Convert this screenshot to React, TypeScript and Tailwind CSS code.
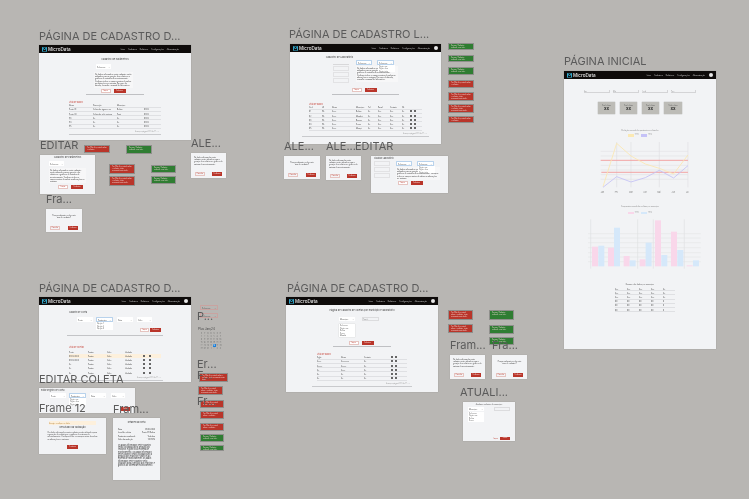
import React from "react";

const PT = "Página de cadastro de coletas";
const LOREM =
  "Os dados informados neste cadastro serão utilizados para a geração dos relatórios e gráficos do sistema de monitoramento.";
const BLOCK = LOREM + " Verifique todos os campos antes de salvar as alterações no sistema.";
const LONG_BLOCK = BLOCK + " Em caso de dúvida, consulte o manual do laboratório.";

const Label = ({ text, className }: { text: string; className: string }) => (
  <div className={`absolute whitespace-nowrap text-[11px] leading-[13px] text-[#5b5b5b] ${className}`}>{text}</div>
);

const Nav = ({ avatar }: { avatar?: boolean }) => (
  <div className={`flex h-[8px] shrink-0 items-center justify-between bg-[#0e0b0a] pl-[3px] ${avatar ? "pr-[3px]" : "pr-[12px]"}`}>
    <div className="flex items-center gap-[1px]">
      <svg width="5" height="5" viewBox="0 0 10 10" fill="none" stroke="#35b6dc" strokeWidth="1.8">
        <path d="M1 9V1l4 5 4-5v8" />
        <path d="M1 1h8M1 9h8" strokeWidth="1" />
      </svg>
      <span className="text-[4.6px] font-medium leading-[5px] text-[#e8e8e8]">MicroData</span>
    </div>
    <div className="flex items-center gap-[3px] text-[1.8px] leading-[3px] text-[#cfcfcf]">
      <span>Início</span>
      <span>Cadastros</span>
      <span>Relatórios</span>
      <span>Configurações</span>
      <span>Administração</span>
      {avatar && <span className="ml-[1px] h-[4px] w-[4px] rounded-full bg-[#e8e8e8]" />}
    </div>
  </div>
);

const Toast = ({ green, long, className }: { green?: boolean; long?: boolean; className: string }) => (
  <div
    className={`absolute overflow-hidden border-[0.5px] border-[#8f8f8c] px-[2px] py-[1px] text-[1.5px] leading-[2px] text-[#f0d9d6] ${
      green ? "bg-[#2f7d32]" : "bg-[#b9352a]"
    } ${className}`}
  >
    {green
      ? "Sucesso! Cadastro realizado com êxito."
      : long
        ? "Erro! Não foi possível salvar o cadastro, tente novamente mais tarde."
        : "Erro! Não foi possível salvar o cadastro."}
  </div>
);

const Buttons = ({ className }: { className?: string }) => (
  <div className={`flex justify-center gap-[3px] ${className ?? ""}`}>
    <span className="flex h-[4px] w-[10px] items-center justify-center border-[0.5px] border-[#e6c4c0] bg-white text-[1.5px] text-[#b9352a]">Limpar</span>
    <span className="flex h-[4px] w-[12px] items-center justify-center bg-[#b9352a] text-[1.5px] text-[#f5dcd9]">Cadastrar</span>
  </div>
);

const Title = ({ text, className }: { text: string; className?: string }) => (
  <div className={`text-center text-[2.4px] leading-[3px] text-[#444] ${className ?? ""}`}>{text}</div>
);

const Field = ({ text, className }: { text: string; className: string }) => (
  <div className={`flex h-[5px] items-center justify-between rounded-[0.5px] bg-white px-[1px] text-[1.8px] leading-[2px] text-[#555] ${className}`}>
    <span>{text}</span>
    <span>⌄</span>
  </div>
);

const TextBlock = ({ long, className }: { long?: boolean; className: string }) => (
  <div className={`bg-[#f7f7f8] p-[1px] text-[1.8px] leading-[2.2px] text-[#3a3a3a] ${className}`}>{long ? LONG_BLOCK : BLOCK}</div>
);

const Actions = () => (
  <span className="flex gap-[2px]">
    <span className="h-[2px] w-[2px] bg-[#666]" />
    <span className="h-[2px] w-[2px] bg-[#666]" />
  </span>
);

const Table = ({ grid, rows, className }: { grid: string; rows: string[][]; className: string }) => (
  <div className={`flex flex-col text-[1.8px] leading-[2px] text-[#444] ${className}`}>
    {rows.map((row, i) => (
      <div key={i} className={`grid h-[4.2px] items-center border-b-[0.5px] border-[#dfe0e3] ${grid}`}>
        {row.map((c, j) => (c === "#" ? <Actions key={j} /> : <span key={j}>{c}</span>))}
      </div>
    ))}
  </div>
);

const ListFooter = ({ className }: { className: string }) => (
  <div className={className}>
    <div className="pr-[2px] text-right text-[1.6px] leading-[2px] text-[#888]">Itens por página 5 1-5 de 12 &lt; &gt;</div>
    <div className="mt-[2px] h-[0.7px] bg-[#c9cacd]" />
  </div>
);

const Confirm = ({ long, className }: { long?: boolean; className: string }) => (
  <div className={`absolute flex flex-col items-center justify-between bg-[#f3f4f6] px-[3px] pb-[2px] pt-[3px] shadow-[0_0_1px_#9a9a98] ${className}`}>
    <div className={`text-[1.7px] leading-[2.2px] text-[#333] ${long ? "text-left" : "px-[2px] pt-[2px] text-center"}`}>
      {long ? LOREM : "Deseja realmente excluir este item do cadastro?"}
    </div>
    <div className="flex w-full justify-between px-[1px]">
      <span className="flex h-[4px] w-[10px] items-center justify-center border-[0.5px] border-[#e6c4c0] text-[1.5px] text-[#b9352a]">Cancelar</span>
      <span className="flex h-[4px] w-[10px] items-center justify-center bg-[#b9352a] text-[1.5px] text-[#f5dcd9]">Confirmar</span>
    </div>
  </div>
);

const Dropdown = ({ className }: { className: string }) => (
  <div className={`absolute bg-white px-[1px] text-[1.7px] leading-[2.4px] text-[#555] ${className}`}>
    Opção um
    <br />
    Opção dois
    <br />
    Opção três
  </div>
);

const LineChart = () => (
  <svg width="103.3" height="53.3" viewBox="90 270 310 160" className="ml-[26px] mt-[3px] block" fill="none">
    {[304, 318, 346, 360, 374, 388].map((y) => (
      <path key={y} d={`M122 ${y}H384`} stroke="#e2e3e5" strokeWidth="2" />
    ))}
    {[170, 213, 298, 384].map((x) => (
      <path key={x} d={`M${x} 276V412`} stroke="#e0e0e2" strokeWidth="2" />
    ))}
    <path d="M122 331H384M124 367H384" stroke="#f2a3a3" strokeWidth="3" />
    <polyline points="129,410 170,280 213,318 256,342 298,355 341,372 384,315" stroke="#fbe7b0" strokeWidth="2.5" />
    <polyline points="129,412 170,380 213,396 256,383 298,361 341,384 384,347" stroke="#c3c0f5" strokeWidth="2.5" />
    <text x="122" y="428" fontSize="6" fill="#888">Jan</text>
    <text x="164" y="428" fontSize="6" fill="#888">Fev</text>
    <text x="207" y="428" fontSize="6" fill="#888">Mar</text>
    <text x="250" y="428" fontSize="6" fill="#888">Abr</text>
    <text x="292" y="428" fontSize="6" fill="#888">Mai</text>
    <text x="335" y="428" fontSize="6" fill="#888">Jun</text>
    <text x="378" y="428" fontSize="6" fill="#888">Jul</text>
  </svg>
);

const bars = [
  [96, 142, "#f9d7ea"],
  [115, 139, "#d5e8fa"],
  [144, 145, "#f9d7ea"],
  [162, 85, "#d5e8fa"],
  [191, 170, "#f9d7ea"],
  [209, 183, "#d5e8fa"],
  [239, 180, "#f9d7ea"],
  [257, 130, "#d5e8fa"],
  [285, 63, "#f9d7ea"],
  [304, 167, "#d5e8fa"],
  [333, 97, "#f9d7ea"],
  [352, 152, "#d5e8fa"],
  [380, 198, "#f9d7ea"],
  [399, 183, "#d5e8fa"],
] as const;

const BarChart = () => (
  <svg width="123.3" height="56.7" viewBox="60 50 370 170" className="ml-[16px] mt-[2px] block" fill="none">
    {[103, 116, 130, 145, 160, 173, 187].map((y) => (
      <path key={y} d={`M84 ${y}H422`} stroke="#e4e5e7" strokeWidth="2" />
    ))}
    {[92, 233, 280, 373].map((x) => (
      <path key={x} d={`M${x} 60V208`} stroke="#e0e1e3" strokeWidth="2" />
    ))}
    {bars.map(([x, top, color]) => (
      <rect key={x} x={x} y={top} width="18" height={201 - top} fill={color} />
    ))}
  </svg>
);

const Legend = ({ a, b, className }: { a: string; b: string; className: string }) => (
  <div className={`flex justify-center gap-[3px] text-[1.5px] leading-[2px] text-[#888] ${className}`}>
    <span className="flex items-center gap-[1px]">
      <span className={`h-[2.5px] w-[5.5px] ${a}`} />
      2023
    </span>
    <span className="flex items-center gap-[1px]">
      <span className={`h-[2.5px] w-[5.5px] ${b}`} />
      2024
    </span>
  </div>
);

const Kpi = ({ className }: { className: string }) => (
  <div className={`flex h-[12.5px] flex-col items-center justify-center bg-[#bdbcb7] shadow-[0_0_1px_#8e8e8c] ${className}`}>
    <span className="text-[1.5px] leading-[2px] text-[#555]">Total coletas</span>
    <span className="text-[3.5px] font-bold leading-[4px] text-[#222]">XX</span>
  </div>
);

const PageFrame = ({ className, children, avatar = true }: { className: string; children: React.ReactNode; avatar?: boolean }) => (
  <div className={`absolute flex flex-col bg-[#f2f3f5] shadow-[0_0_1px_#8e8e8c] ${className}`}>
    <Nav avatar={avatar} />
    {children}
  </div>
);

const FilterBox = ({ text, className }: { text: string; className: string }) => (
  <div className={`h-[3px] border-b-[0.5px] border-r-[0.5px] border-[#d4d4d6] text-[1.6px] leading-[2px] text-[#888] ${className}`}>{text}</div>
);

const days = ["S", "T", "Q", "Q", "S", "S", "D", ...Array.from({ length: 35 }, (_, i) => String((i % 31) + 1))];

export default function App() {
  return (
    <div className="h-[499px] w-[749px] overflow-hidden bg-[#b8b6b3]">
      <div className="relative h-[499px] w-[749px] bg-[#b8b6b3] font-['Inter',sans-serif] blur-[0.35px]">
        {/* coletas */}
        <PageFrame avatar={false} className="left-[39px] top-[45px] h-[95px] w-[152px]">
          <Title text="Cadastro de Parâmetros" className="mt-[5px]" />
          <Field text="Selecione" className="ml-[57px] mt-[3px] w-[15px]" />
          <TextBlock long className="ml-[55px] mt-[3px] h-[16px] w-[39px]" />
          <Buttons className="mt-[1px] pr-[4px]" />
          <div className="mx-[47px] mt-[1px] h-[0.7px] bg-[#bfc0c3]" />
          <div className="ml-[30px] mt-[6px] text-[2px] leading-[3px] text-[#c8493e]">Lista de dados</div>
          <Table
            grid="grid-cols-[24px_24px_27px_20px]"
            rows={[
              ["Nome", "Descrição", "Município", ""],
              ["Ponto 01", "Coleta de água no rio", "Belém", "01/02"],
              ["Ponto 02", "Coleta de solo na área", "Pará", "01/02"],
              ["P3", "Xx", "Xx", "01/02"],
              ["P4", "Xx", "Xx", "01/02"],
              ["P5", "Xx", "Xx", "01/02"],
            ]}
            className="mx-[30px]"
          />
          <ListFooter className="mx-[30px] mt-[1px]" />
        </PageFrame>

        <div className="absolute left-[40px] top-[155px] flex h-[39px] w-[55px] flex-col bg-[#f2f3f5] shadow-[0_0_1px_#8e8e8c]">
          <Title text="Cadastro de Parâmetros" className="mt-[1px]" />
          <Field text="Selecione" className="ml-[9px] mt-[2px] w-[15px]" />
          <TextBlock className="mx-[9px] mt-[2px] h-[15px]" />
          <Buttons className="mt-[2px] pl-[6px]" />
        </div>
        <Confirm className="left-[46px] top-[209px] h-[23px] w-[36px]" />
        <Confirm long className="left-[191px] top-[153px] h-[25px] w-[35px]" />
        <Toast className="left-[84px] top-[145px] h-[8px] w-[26px]" />
        <Toast green className="left-[126px] top-[145px] h-[9px] w-[26px]" />
        <Toast long className="left-[109px] top-[164px] h-[10px] w-[26px]" />
        <Toast long className="left-[109px] top-[176px] h-[10px] w-[26px]" />
        <Toast green className="left-[151px] top-[165px] h-[8px] w-[25px]" />
        <Toast green className="left-[151px] top-[176px] h-[8px] w-[25px]" />

        {/* laboratório */}
        <PageFrame className="left-[290px] top-[44px] h-[100px] w-[151px]">
          <Title text="Cadastro de Laboratório" className="mt-[4px] pr-[52px]" />
          <div className="relative mt-[1px] flex gap-[7px] pl-[43px]">
            <div className="flex w-[16px] flex-col gap-[1px] pt-[1px]">
              <div className="h-[4px] border-b-[0.5px] border-[#d8d8da]" />
              <div className="h-[5px] border-[0.5px] border-[#e2e2e4]" />
              <div className="h-[5px] border-[0.5px] border-[#e2e2e4]" />
              <div className="h-[5px] border-[0.5px] border-[#e2e2e4]" />
            </div>
            <div className="flex flex-col">
              <div className="flex gap-[5px]">
                <Field text="Selecione" className="w-[16px] border-[0.5px] border-[#b8d2ec]" />
                <Field text="Selecione" className="w-[17px] border-[0.5px] border-[#b8d2ec]" />
              </div>
              <TextBlock long className="mt-[1px] h-[16px] w-[42px]" />
            </div>
            <Dropdown className="left-[88px] top-[5px] w-[17px]" />
          </div>
          <Buttons className="mt-[5px] pr-[3px]" />
          <div className="mx-[42px] mt-[2px] h-[0.7px] bg-[#bfc0c3]" />
          <div className="ml-[19px] mt-[8px] text-[2px] leading-[3px] text-[#c8493e]">Lista de dados</div>
          <Table
            grid="grid-cols-[13px_10px_24px_12px_10px_12px_12px_8px_10px]"
            rows={[
              ["Cód", "Uf", "Nome", "Município", "Tel", "Email", "Contato", "Ok", ""],
              ["01", "PA", "Xxxx", "Belém", "Xx", "Xxx", "Xxx", "Xx", "#"],
              ["02", "PA", "Xxxx", "Marabá", "Xx", "Xxx", "Xxx", "Xx", "#"],
              ["03", "PA", "Xxxx", "Breves", "Xx", "Xxx", "Xxx", "Xx", "#"],
              ["04", "PA", "Xxxx", "Soure", "Xx", "Xxx", "Xxx", "Xx", "#"],
              ["05", "PA", "Xxxx", "Marajó", "Xx", "Xxx", "Xxx", "Xx", "#"],
            ]}
            className="mx-[19px]"
          />
          <ListFooter className="mx-[12px] mt-[1px]" />
        </PageFrame>
        <Toast green className="left-[448px] top-[43px] h-[7px] w-[26px]" />
        <Toast green className="left-[448px] top-[55px] h-[7px] w-[26px]" />
        <Toast green className="left-[448px] top-[67px] h-[8px] w-[26px]" />
        <Toast className="left-[448px] top-[80px] h-[8px] w-[26px]" />
        <Toast long className="left-[448px] top-[92px] h-[9px] w-[26px]" />
        <Toast long className="left-[448px] top-[104px] h-[9px] w-[26px]" />
        <Toast className="left-[448px] top-[116px] h-[7px] w-[26px]" />
        <Confirm className="left-[284px] top-[156px] h-[23px] w-[36px]" />
        <Confirm long className="left-[326px] top-[156px] h-[24px] w-[35px]" />
        <div className="absolute left-[371px] top-[156px] flex h-[37px] w-[77px] flex-col bg-[#f2f3f5] px-[3px] shadow-[0_0_1px_#8e8e8c]">
          <div className="mt-[1px] text-[2px] leading-[3px] text-[#444]">Atualizar Laboratório</div>
          <div className="relative mt-[1px] flex gap-[6px]">
            <div className="flex w-[16px] flex-col gap-[1px]">
              <div className="h-[5px] border-[0.5px] border-[#e2e2e4]" />
              <div className="h-[5px] border-[0.5px] border-[#e2e2e4]" />
              <div className="h-[5px] border-[0.5px] border-[#e2e2e4]" />
            </div>
            <div className="flex flex-col">
              <div className="flex gap-[5px]">
                <Field text="Selecione" className="w-[16px] border-[0.5px] border-[#b8d2ec]" />
                <Field text="Selecione" className="w-[17px] border-[0.5px] border-[#b8d2ec]" />
              </div>
              <TextBlock className="mt-[1px] h-[13px] w-[44px]" />
            </div>
            <Dropdown className="left-[44px] top-[5px] w-[17px]" />
          </div>
          <Buttons className="mt-[1px] pl-[1px]" />
        </div>

        {/* página inicial */}
        <PageFrame className="left-[564px] top-[71px] h-[278px] w-[152px]">
          <div className="mt-[11px] flex pl-[20px]">
            <FilterBox text="Ano" className="mr-[3px] w-[26px]" />
            <FilterBox text="Mês" className="mr-[3px] w-[26px]" />
            <FilterBox text="Local" className="mr-[3px] w-[26px]" />
            <FilterBox text="Tipo" className="w-[25px]" />
          </div>
          <div className="mt-[8.5px] flex gap-[5px] pl-[34px]">
            <Kpi className="w-[17px]" />
            <Kpi className="w-[17px]" />
            <Kpi className="w-[17px]" />
            <Kpi className="w-[18px]" />
          </div>
          <Title text="Evolução mensal dos parâmetros coletados" className="mt-[14.5px] !text-[1.8px] !text-[#888]" />
          <Legend a="bg-[#fbe9b4]" b="bg-[#c5c2f7]" className="mt-[2.5px]" />
          <LineChart />
          <Title text="Comparativo anual das coletas por município" className="mt-[12.5px] !text-[1.8px] !text-[#888]" />
          <Legend a="bg-[#f9d7ea]" b="bg-[#d5e8fa]" className="mt-[3.5px]" />
          <BarChart />
          <Title text="Resumo dos dados por município" className="mt-[10px] !text-[1.8px] !text-[#555]" />
          <Table
            grid="grid-cols-[12px_12px_12px_12px_10px]"
            rows={[
              ["Xxx", "Xxx", "Xxx", "Xxx", "Xx"],
              ["Xxx", "Xxx", "Xxx", "Xxx", "Xx"],
              ["Xxx", "Xxx", "Xxx", "Xxx", "Xx"],
              ["00", "00", "00", "00", "0"],
              ["00", "00", "00", "00", "0"],
              ["00", "00", "00", "00", "0"],
            ]}
            className="ml-[51px] mr-[41px] mt-[1px]"
          />
        </PageFrame>

        {/* coleta */}
        <PageFrame className="left-[39px] top-[297px] h-[85px] w-[152px]">
          <div className="ml-[30px] mt-[6px] text-[2px] leading-[3px] text-[#444]">Cadastro de Coleta</div>
          <div className="mt-[3px] flex gap-[3px] pl-[38px]">
            <Field text="Ponto" className="w-[16px]" />
            <div className="flex flex-col bg-white">
              <Field text="Parâmetro" className="w-[17px] border-[0.5px] border-[#b8d2ec]" />
              <div className="px-[1px] text-[1.8px] leading-[2.6px] text-[#555]">
                Opção 1
                <br />
                Opção 2
                <br />
                Opção 3
              </div>
            </div>
            <Field text="Data" className="ml-[1px] w-[16px]" />
            <Field text="Valor" className="ml-[1px] w-[15px]" />
          </div>
          <div className="mt-[-2px] flex justify-end gap-[1px] pr-[30px]">
            <span className="flex h-[4px] w-[9px] items-center justify-center border-[0.5px] border-[#e6c4c0] bg-white text-[1.5px] text-[#b9352a]">Limpar</span>
            <span className="flex h-[4px] w-[11px] items-center justify-center bg-[#b9352a] text-[1.5px] text-[#f5dcd9]">Cadastrar</span>
          </div>
          <div className="mx-[28px] mt-[3px] h-[0.7px] bg-[#c3c4c7]" />
          <div className="ml-[30px] mt-[11px] text-[2px] leading-[3px] text-[#c8493e]">Lista de coletas</div>
          <div className="mx-[30px] flex flex-col text-[1.8px] leading-[2px] text-[#444]">
            {["Ponto", "01/02/2024", "01/02/2024", "Xx", "Xx", "Xx"].map((c, i) => (
              <div key={i} className={`grid h-[4.2px] grid-cols-[19px_19px_18px_18px_20px] items-center ${i === 1 ? "bg-[#fdf0dc]" : ""}`}>
                <span>{c}</span>
                <span>Parâm.</span>
                <span>Valor</span>
                <span>Unidade</span>
                {i > 0 ? <span className="flex gap-[4px]"><span className="h-[2px] w-[2px] bg-[#666]" /><span className="h-[2px] w-[2px] bg-[#666]" /></span> : <span />}
              </div>
            ))}
          </div>
          <ListFooter className="mx-[28px] mt-[1px]" />
        </PageFrame>
        <div className="absolute left-[39px] top-[388px] flex h-[25px] w-[96px] flex-col bg-[#f2f3f5] px-[2px] shadow-[0_0_1px_#8e8e8c]">
          <div className="mt-[1px] text-[2px] leading-[3px] text-[#444]">Editar Registro de Coleta</div>
          <div className="relative mt-[1px] flex gap-[3px] pl-[9px]">
            <Field text="Ponto" className="w-[16px]" />
            <Field text="Parâmetro" className="w-[17px] border-[0.5px] border-[#b8d2ec]" />
            <Field text="Data" className="ml-[1px] w-[16px]" />
            <Field text="Valor" className="ml-[2px] w-[14px]" />
            <Dropdown className="left-[28px] top-[5px] w-[17px]" />
          </div>
          <div className="mt-[9px] flex justify-end pr-[3px]">
            <span className="flex h-[4px] w-[9px] items-center justify-center bg-[#b9352a] text-[1.5px] text-[#f5dcd9]">Salvar</span>
          </div>
        </div>
        <div className="absolute left-[39px] top-[418px] flex h-[36px] w-[67px] flex-col items-center bg-[#f2f3f5] shadow-[0_0_1px_#8e8e8c]">
          <div className="mx-[10px] mt-[3px] h-[4px] self-stretch bg-[#fdf0dc] text-[1.6px] leading-[4px] text-[#b07a2a]">Atenção: verifique os dados</div>
          <Title text="Resultado da validação" className="mt-[1px]" />
          <div className="mt-[2px] h-[11px] w-[50px] text-[1.8px] leading-[2.2px] text-[#444]">{BLOCK}</div>
          <span className="mt-[3px] flex h-[4px] w-[11px] items-center justify-center bg-[#b9352a] text-[1.5px] text-[#f5dcd9]">Continuar</span>
        </div>
        <div className="absolute left-[113px] top-[418px] flex h-[62px] w-[47px] flex-col bg-[#f2f3f5] px-[5px] shadow-[0_0_1px_#8e8e8c]">
          <div className="mt-[3px] text-center text-[2px] leading-[3px] text-[#333]">Detalhes da coleta</div>
          <div className="mt-[4px] flex flex-col gap-[1px] text-[1.8px] leading-[2.4px] text-[#333]">
            <div className="flex justify-between"><span>Data</span><span>01/02/2024</span></div>
            <div className="flex justify-between"><span>Local de coleta</span><span>Ponto 01 Belém</span></div>
            <div className="flex justify-between"><span>Parâmetro analisado</span><span>Turbidez</span></div>
            <div className="flex justify-between"><span>Valor da medição</span><span>120 NTU</span></div>
          </div>
          <div className="mt-[3px] text-[1.9px] leading-[2.3px] text-[#333]">{LOREM} {LOREM} {LOREM}</div>
        </div>

        {/* peças soltas da coluna ao lado */}
        <Field text="Selecione" className="absolute left-[200px] top-[305px] w-[18px] border-[0.5px] border-[#c9a3a0] !bg-transparent" />
        <Field text="Selecione" className="absolute left-[200px] top-[313px] w-[18px] border-[0.5px] border-[#c9a3a0] !bg-transparent" />
        <div className="absolute left-[198px] top-[327px] w-[24px] text-[1.7px] leading-[3px] text-[#666]">
          <div className="text-[3px] leading-[4px] text-[#444]">Plus Jan/24</div>
          <div className="ml-[2px] mt-[1px] grid grid-cols-7 text-center">
            {days.map((d, i) => (
              <span key={i} className={i === 32 ? "bg-[#1f7fd6] text-white" : ""}>{d}</span>
            ))}
          </div>
        </div>
        <Toast long className="left-[199px] top-[373px] h-[9px] w-[29px]" />
        <Toast long className="left-[198px] top-[386px] h-[9px] w-[25px]" />
        <Toast className="left-[200px] top-[400px] h-[8px] w-[24px]" />
        <Toast className="left-[200px] top-[411px] h-[8px] w-[24px]" />
        <Toast className="left-[200px] top-[423px] h-[8px] w-[24px]" />
        <Toast green className="left-[200px] top-[434px] h-[8px] w-[24px]" />
        <Toast green className="left-[200px] top-[445px] h-[6px] w-[24px]" />

        {/* município */}
        <PageFrame className="left-[286px] top-[297px] h-[95px] w-[152px]">
          <Title text={PT + " por município e laboratório"} className="mt-[4px]" />
          <div className="mt-[5px] flex gap-[7px] pl-[53px]">
            <div className="flex flex-col gap-[3px]">
              <Field text="Município" className="w-[16px] !h-[4px]" />
              <div className="w-[16px] bg-white px-[1px] text-[1.7px] leading-[2.6px] text-[#555] shadow-[0_0_1px_#bbb]">
                Selecione
                <br />
                Opção um
                <br />
                Belém
                <br />
                Soure
                <br />
                Marabá
              </div>
            </div>
            <div className="h-[4px] w-[17px] border-[0.5px] border-[#dcdcde] text-[1.6px] leading-[2px] text-[#888]">Estado</div>
          </div>
          <Buttons className="mt-[4px] pr-[2px]" />
          <div className="mx-[47px] mt-[1px] h-[0.7px] bg-[#bfc0c3]" />
          <div className="ml-[31px] mt-[6px] text-[2px] leading-[3px] text-[#c8493e]">Lista de dados</div>
          <Table
            grid="grid-cols-[24px_23px_27px_16px]"
            rows={[
              ["Sigla", "Nome", "Contato", "#"],
              ["Xxxx", "Xxxxxxxx", "Xx", "#"],
              ["Xxxxx", "Xxxxx", "Xx", "#"],
              ["Xx", "Xxxx", "Xx", "#"],
              ["Xx", "Xx", "Xx", "#"],
              ["Xx", "Xx", "Xx", "#"],
            ]}
            className="mx-[31px]"
          />
          <ListFooter className="mx-[26px] mt-[1px]" />
        </PageFrame>
        <Toast long className="left-[448px] top-[310px] h-[10px] w-[25px]" />
        <Toast long className="left-[448px] top-[324px] h-[9px] w-[25px]" />
        <Toast green className="left-[489px] top-[310px] h-[10px] w-[25px]" />
        <Toast green className="left-[489px] top-[325px] h-[9px] w-[25px]" />
        <Toast green className="left-[489px] top-[337px] h-[8px] w-[25px]" />
        <Confirm long className="left-[450px] top-[355px] h-[24px] w-[35px]" />
        <Confirm className="left-[492px] top-[355px] h-[24px] w-[35px]" />
        <div className="absolute left-[463px] top-[402px] flex h-[39px] w-[52px] flex-col bg-[#f2f3f5] px-[5px] shadow-[0_0_1px_#8e8e8c]">
          <div className="mt-[1px] text-center text-[1.8px] leading-[3px] text-[#555]">Atualizar cadastro de município</div>
          <div className="mt-[1px] flex justify-between">
            <Field text="Município" className="w-[16px] !h-[4px]" />
            <div className="h-[4px] w-[16px] border-[0.5px] border-[#dcdcde]" />
          </div>
          <div className="mt-[1px] w-[16px] bg-white px-[1px] text-[1.7px] leading-[2.4px] text-[#555]">
            Selecione
            <br />
            Opção um
            <br />
            Belém
            <br />
            Soure
          </div>
          <div className="mb-[1px] mt-auto flex justify-end gap-[2px]">
            <span className="text-[1.5px] leading-[3px] text-[#b9352a]">Limpar</span>
            <span className="flex h-[3px] w-[10px] items-center justify-center bg-[#b9352a] text-[1.5px] text-[#f5dcd9]">Salvar</span>
          </div>
        </div>

        {/* nomes dos frames */}
        <Label text="PÁGINA DE CADASTRO D..." className="left-[39px] top-[30px]" />
        <Label text="EDITAR" className="left-[40px] top-[139px]" />
        <Label text="ALE..." className="left-[191px] top-[137px]" />
        <Label text="Fra..." className="left-[46px] top-[193px]" />
        <Label text="PÁGINA DE CADASTRO L..." className="left-[289px] top-[28px]" />
        <Label text="ALE..." className="left-[284px] top-[140px]" />
        <Label text="ALE..." className="left-[326px] top-[140px]" />
        <Label text="EDITAR" className="left-[355px] top-[140px]" />
        <Label text="PÁGINA INICIAL" className="left-[564px] top-[55px]" />
        <Label text="PÁGINA DE CADASTRO D..." className="left-[39px] top-[282px]" />
        <Label text="EDITAR COLETA" className="left-[39px] top-[373px]" />
        <Label text="Frame 12" className="left-[39px] top-[402px]" />
        <Label text="Fram..." className="left-[113px] top-[403px]" />
        <Label text="P..." className="left-[197px] top-[310px]" />
        <Label text="Er..." className="left-[197px] top-[358px]" />
        <Label text="F..." className="left-[197px] top-[369px]" />
        <Label text="Fr..." className="left-[197px] top-[395px]" />
        <Label text="PÁGINA DE CADASTRO D..." className="left-[287px] top-[282px]" />
        <Label text="Fram..." className="left-[450px] top-[339px]" />
        <Label text="Fra..." className="left-[492px] top-[339px]" />
        <Label text="ATUALI..." className="left-[460px] top-[386px]" />
      </div>
    </div>
  );
}
